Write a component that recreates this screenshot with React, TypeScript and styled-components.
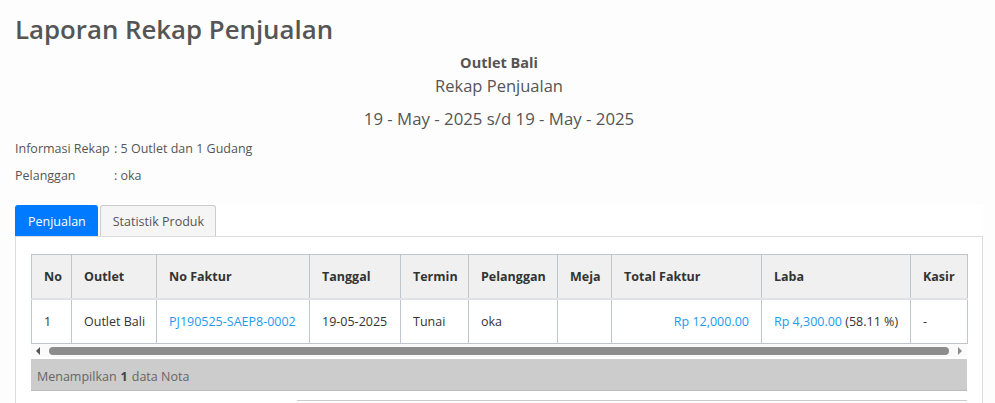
import React from 'react';
import styled, { createGlobalStyle } from 'styled-components';

const GlobalStyle = createGlobalStyle`
	body {
		margin: 0;
		background: #fdfdfd;
		font-family: 'Open Sans', 'Noto Sans', sans-serif;
		color: #555;
	}
`;

type Column = {
	label: string;
	width: number;
};

const columns: Column[] = [
	{ label: 'No', width: 40 },
	{ label: 'Outlet', width: 85 },
	{ label: 'No Faktur', width: 153 },
	{ label: 'Tanggal', width: 91 },
	{ label: 'Termin', width: 68 },
	{ label: 'Pelanggan', width: 89 },
	{ label: 'Meja', width: 54 },
	{ label: 'Total Faktur', width: 150 },
	{ label: 'Laba', width: 149 },
	{ label: 'Kasir', width: 57 },
];

const App: React.FC = () => {
	return (
		<>
			<GlobalStyle />
			<Page>
				<Title>Laporan Rekap Penjualan</Title>
				<ReportHead>
					<OutletName>Outlet Bali</OutletName>
					<ReportName>Rekap Penjualan</ReportName>
					<Period>19 - May - 2025 s/d 19 - May - 2025</Period>
				</ReportHead>
				<InfoRow>
					<InfoLabel>Informasi Rekap</InfoLabel>
					<span>: 5 Outlet dan 1 Gudang</span>
				</InfoRow>
				<InfoRow>
					<InfoLabel>Pelanggan</InfoLabel>
					<span>: oka</span>
				</InfoRow>
				<Card>
					<Tabs>
						<Tab active>Penjualan</Tab>
						<Tab>Statistik Produk</Tab>
					</Tabs>
					<Panel>
						<Table>
							<colgroup>
								{columns.map((c) => (
									<col key={c.label} style={{ width: c.width }} />
								))}
							</colgroup>
							<thead>
								<tr>
									{columns.map((c) => (
										<Th key={c.label}>{c.label}</Th>
									))}
								</tr>
							</thead>
							<tbody>
								<tr>
									<Td>1</Td>
									<Td>Outlet Bali</Td>
									<Td>
										<Link>PJ190525-SAEP8-0002</Link>
									</Td>
									<Td>19-05-2025</Td>
									<Td>Tunai</Td>
									<Td>oka</Td>
									<Td></Td>
									<Td align="right">
										<Link>Rp 12,000.00</Link>
									</Td>
									<Td>
										<Link>Rp 4,300.00</Link> (58.11 %)
									</Td>
									<Td>-</Td>
								</tr>
							</tbody>
						</Table>
						<ScrollBar>
							<Arrow dir="left" />
							<Thumb />
							<Arrow dir="right" />
						</ScrollBar>
						<Footer>
							Menampilkan <b>1</b> data Nota
						</Footer>
						<NextBlock />
					</Panel>
				</Card>
			</Page>
		</>
	);
};
export default App;

const Page = styled.div`
	padding: 0 12px 0 15px;
`;

const Title = styled.h1`
	margin: 0;
	padding-top: 10px;
	font-size: 25.8px;
	font-weight: 600;
	line-height: 38px;
	color: #555;
`;

const ReportHead = styled.div`
	display: flex;
	flex-direction: column;
	align-items: center;
	color: #555;
`;

const OutletName = styled.div`
	font-size: 14.5px;
	font-weight: 700;
	line-height: 22px;
	margin-top: 4px;
`;

const ReportName = styled.div`
	font-size: 16.5px;
	line-height: 24px;
`;

const Period = styled.div`
	font-size: 16.8px;
	font-weight: 500;
	line-height: 24px;
	margin-top: 9px;
`;

const InfoRow = styled.div`
	display: flex;
	font-size: 12.5px;
	line-height: 18px;
	margin-top: 9px;
	color: #555;
`;

const InfoLabel = styled.span`
	width: 99px;
`;

const Card = styled.div`
	margin-top: 19px;
	background: #fff;
`;

const Tabs = styled.div`
	display: flex;
	gap: 2px;
	border-bottom: 1px solid #ddd;
	padding-top: 1px;
`;

const Tab = styled.div<{ active?: boolean }>`
	height: 30px;
	padding: 0 11px 0 12px;
	display: flex;
	align-items: center;
	font-size: 12.5px;
	border-radius: 3px 3px 0 0;
	border: 1px solid ${(p) => (p.active ? '#007bff' : '#ccc')};
	border-bottom: none;
	background: ${(p) => (p.active ? '#007bff' : '#f5f5f5')};
	color: ${(p) => (p.active ? '#fff' : '#555')};
`;

const Panel = styled.div`
	border-left: 1px solid #ddd;
	border-right: 1px solid #ddd;
	padding: 17px 15px 0;
`;

const Table = styled.table`
	width: 936px;
	table-layout: fixed;
	border-collapse: collapse;
	font-size: 12.5px;
	color: #333;
`;

const Th = styled.th`
	height: 43px;
	padding: 0 12px;
	text-align: left;
	font-weight: 700;
	background: #f0f0f0;
	border: 1px solid #bfc5ca;
	border-bottom: 2px solid #dee2e6;
	white-space: nowrap;
	overflow: hidden;
`;

const Td = styled.td`
	height: 43px;
	padding: 0 12px;
	border: 1px solid #bfc5ca;
	white-space: nowrap;
	overflow: hidden;
`;

const Link = styled.span`
	color: #1e9af0;
`;

const ScrollBar = styled.div`
	width: 936px;
	height: 13px;
	display: flex;
	align-items: center;
	background: #fafafa;
`;

const Thumb = styled.div`
	flex: 1;
	height: 8px;
	border-radius: 4px;
	background: #8c8c8c;
	margin: 0 4px;
`;

const Arrow = styled.div<{ dir: 'left' | 'right' }>`
	width: 0;
	height: 0;
	margin: 0 5px;
	border-top: 4px solid transparent;
	border-bottom: 4px solid transparent;
	${(p) =>
		p.dir === 'left'
			? 'border-right: 4px solid #555;'
			: 'border-left: 4px solid #8c8c8c;'}
`;

const Footer = styled.div`
	width: 936px;
	box-sizing: border-box;
	height: 32px;
	margin-top: 2px;
	padding: 4px 6px 0;
	display: flex;
	align-items: center;
	gap: 4px;
	font-size: 12.5px;
	color: #666;
	background: #ccc;
	border-bottom: 1px solid #bbb;
	b {
		color: #444;
	}
`;

const NextBlock = styled.div`
	margin: 9px 0 0 266px;
	width: 670px;
	height: 10px;
	border-top: 1px solid #ccc;
`;
